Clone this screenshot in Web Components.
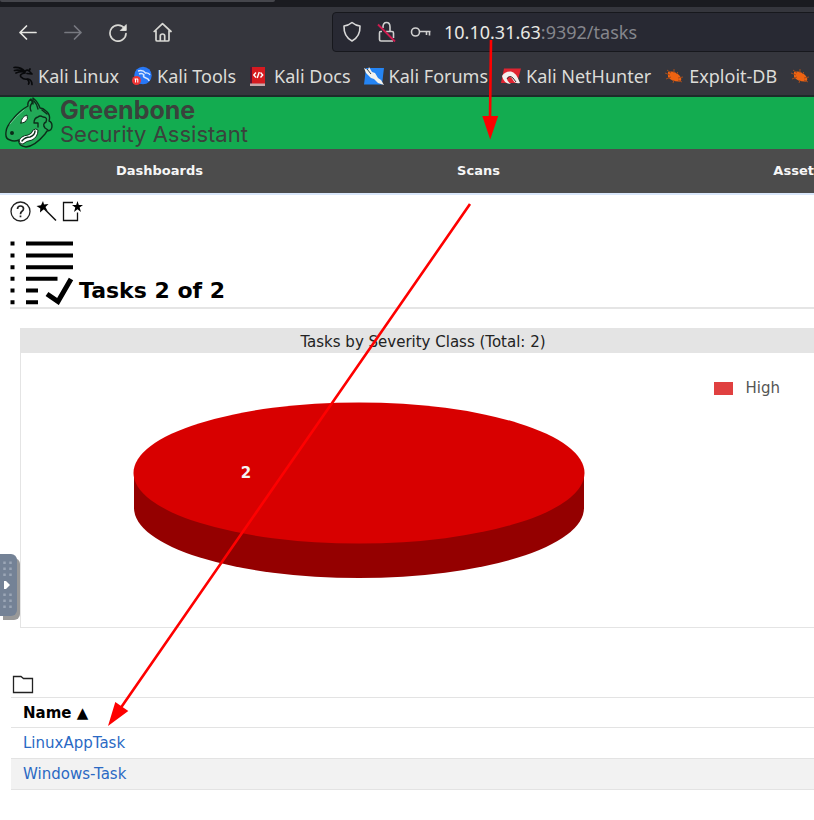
<!DOCTYPE html>
<html lang="en">
<head>
<meta charset="utf-8">
<title>Greenbone Security Assistant</title>
<style>
html { background: #fff; overflow-x: hidden; }
body { margin: 0; font-family: "DejaVu Sans", sans-serif; font-size: 15px; color: #000; }
</style>
</head>
<body>
<gsa-screen></gsa-screen>
<script>
function define(name, html) {
  const t = document.createElement('template');
  t.innerHTML = html;
  customElements.define(name, class extends HTMLElement {
    constructor() {
      super();
      this.attachShadow({ mode: 'open' }).append(t.content.cloneNode(true));
    }
  });
}

define('bookmark-link', `
<style>
:host { display: block; flex: none; }
a { display: flex; align-items: center; gap: 5px; color: #dcdcd8; text-decoration: none; font-size: 18px; line-height: 24px; white-space: nowrap; }
</style>
<a href="#"><slot name="icon"></slot><span><slot></slot></span></a>`);

define('browser-chrome', `
<style>
:host { display: block; background: #35363d; border-bottom: 2px solid #1d2b29; font-family: "Noto Sans", sans-serif; overflow: hidden; }
.tabs { height: 7px; background: #1a1b20; }
.tab { width: 275px; height: 2px; background: #45464c; border-radius: 0 0 4px 4px; }
.bar { display: flex; align-items: center; height: 50px; padding-left: 18px; }
button { flex: none; background: none; border: 0; padding: 0; width: 20px; height: 20px; margin-right: 25px; }
svg { display: block; flex: none; }
.field { flex: 1; display: flex; align-items: center; box-sizing: border-box; height: 40px; margin: 0 -20px 0 134px; padding-left: 9px; border: 1px solid #17181d; border-radius: 4px; background: #282933; }
.field button { width: 22px; height: 22px; margin-right: 12px; }
.url { font-size: 18px; line-height: 24px; color: #85868c; white-space: nowrap; margin: 0; }
.url b { font-weight: 400; color: #e8e8e4; }
.marks { display: flex; align-items: center; height: 38px; padding-left: 13px; gap: 13px; }
</style>
<div class="tabs"><div class="tab"></div></div>
<div class="bar">
 <button aria-label="Back"><svg width="20" height="20" fill="none" stroke="#e6e6e2" stroke-width="1.7" stroke-linecap="round" stroke-linejoin="round"><path d="M18 10.500H2M8.500 4L2 10.500L8.500 17"/></svg></button>
 <button aria-label="Forward"><svg width="20" height="20" fill="none" stroke="#777980" stroke-width="1.7" stroke-linecap="round" stroke-linejoin="round"><path d="M2 10.500H18M11.500 4L18 10.500L11.500 17"/></svg></button>
 <button aria-label="Reload"><svg width="20" height="20" fill="none" stroke="#d8d8d4" stroke-width="1.7" stroke-linecap="round"><path d="M16.500 6.500A8 8 0 1 0 18 11.500"/><path d="M18.200 3V8.500H12.700Z" fill="#e6e6e2" stroke-width="1"/></svg></button>
 <button aria-label="Home"><svg width="20" height="20" fill="none" stroke="#d8d8d4" stroke-width="1.7" stroke-linejoin="round" stroke-linecap="round"><path d="M1.200 9.500L9.500 1.700L18 9.500M3 8.500V18Q3 19 4.500 19H14.500Q16 19 16 18V8.500M7.300 18.500V14Q7.300 12 9.500 12Q11.700 12 11.700 14V18.500"/></svg></button>
 <div class="field">
  <button aria-label="Tracking protection"><svg width="22" height="22" fill="none" stroke="#d8d8d8" stroke-width="1.6" stroke-linejoin="round"><path d="M10 1.500Q13.500 4.500 18 5Q18.400 15.500 10 20Q1.600 15.500 2 5Q6.500 4.500 10 1.500Z"/></svg></button>
  <button aria-label="Connection not secure"><svg width="22" height="22" fill="none" stroke="#d0d0d0" stroke-width="1.6"><path d="M7 7V6Q7 1.500 10.500 1.500Q14 1.500 14 6V10M10 10.500H16Q17.500 10.500 17.500 12V17M6 10.500H4.500Q3.500 10.500 3.500 12V18.500Q3.500 20 5 20H17"/><path d="M2 3.500L19 20.500" stroke="#d01b50" stroke-width="1.800"/></svg></button>
  <button aria-label="Saved login"><svg width="22" height="22" fill="none" stroke="#d0d0d0" stroke-width="1.6"><circle cx="5.500" cy="11" r="4"/><path d="M9.500 10.500H20.500M16.500 10.500V14M19.500 10.500V14.500"/></svg></button>
  <p class="url"><b>10.10.31.63</b>:9392/tasks</p>
 </div>
</div>
<nav class="marks">
 <bookmark-link><svg slot="icon" width="20" height="20" fill="none" stroke="#08090b" stroke-width="1.700" stroke-linecap="round" stroke-linejoin="round"><path d="M1 1.500Q8 1 12 5.500Q5 3.500 1.500 4.500M3 7Q9 4.500 12 7Q6 8 8 11Q11 14 15 13Q19 14 19 18.500M12 5.500Q14 3 16 5L19 8L14 7.500M14 13Q17 16 15.500 18M16 5L17 3"/></svg>Kali Linux</bookmark-link>
 <bookmark-link><svg slot="icon" width="20" height="20"><circle cx="11" cy="9.500" r="8.700" fill="#2878f6"/><path d="M6 5Q11 3.500 13.500 7Q17 6.500 18 9M7 8Q10 6.500 12 9Q10 10.500 14 12Q17 13 17 15" fill="none" stroke="#d6e6ff" stroke-width="1.400"/><circle cx="4.500" cy="14.500" r="4.500" fill="#ee3434"/><path d="M3.500 13V16.500M5.800 13V16.500M2.500 13H6" stroke="#fff" fill="none"/></svg>Kali Tools</bookmark-link>
 <bookmark-link><svg slot="icon" width="20" height="20"><path d="M1 1H16V18H1Z" fill="#d61a20"/><path d="M1 1H3V18H1Z" fill="#5d1232"/><path d="M1 17.500H16V20H1Z" fill="#c7a8aa"/><path d="M7 6.500L4.800 9L7 11.500M11.500 6.500L13.700 9L11.500 11.500M10.300 6L8.200 12" stroke="#fff" stroke-width="1.400" fill="none"/></svg>Kali Docs</bookmark-link>
 <bookmark-link><svg slot="icon" width="20" height="20"><path d="M2 2H20L18 18.500H0Z" fill="#2585f4"/><path d="M0 2L4 4L5 1L8 6L11 7L14 12L17 14L20 19L14 17L10 13L7 12L2 7Z" fill="#f2f2ee"/><path d="M3 3L7 8" stroke="#444" fill="none"/></svg>Kali Forums</bookmark-link>
 <bookmark-link><svg slot="icon" width="20" height="20"><path d="M3 2.500H20L16 17H0Z" fill="#e02431"/><path d="M1 10Q4 5 10 5.500Q15 6 19 17Q14 18 12 14Q10 10 7 11Q4 14 10 18Q3 18 1 10Z" fill="#f4f0ee"/><path d="M6 13Q8 8.500 12 12L15 16" stroke="#3a2028" fill="none"/></svg>Kali NetHunter</bookmark-link>
 <bookmark-link><svg slot="icon" width="20" height="20"><path d="M4 6Q10 4 15 9Q19 13 16 15.500Q8 16 4 11Z" fill="#ef6311"/><path d="M3 4L7 7M10 3L10 7M14 6L12 8M19 11L14 12M18 16L14 14M1 7L6 9M2 13L7 11M9 17L10 14" stroke="#a34c1d" fill="none"/></svg>Exploit-DB</bookmark-link>
 <bookmark-link><svg slot="icon" width="20" height="20"><path d="M4 6Q10 4 15 9Q19 13 16 15.500Q8 16 4 11Z" fill="#ef6311"/><path d="M3 4L7 7M10 3L10 7M14 6L12 8M19 11L14 12M18 16L14 14M1 7L6 9M2 13L7 11M9 17L10 14" stroke="#a34c1d" fill="none"/></svg></bookmark-link>
</nav>`);

define('gsa-header', `
<style>
:host { display: flex; align-items: flex-start; height: 52px; padding-left: 5px; gap: 6px; background: #13ac50; color: #3a423c; font-family: Inter, sans-serif; }
svg { flex: none; }
p { margin: 0; font-size: 22px; line-height: 22px; }
.name { font-size: 25px; line-height: 26px; font-weight: 700; }
</style>
<svg width="49" height="52" fill="none" stroke="#0c2e1a" stroke-width="1.400" stroke-linejoin="round" stroke-linecap="round">
 <path d="M23 9Q14 14 8 22Q1 30 1 35Q0 42 5 43Q9 45 14 43Q13 49 21 50Q30 49 40 37L42 34Q47 34 47 29Q47 25 44 24Q46 18 41 14Q38 11 35 11Q33 5 28 1L28 7L26 2Q22 5 23 9Z" fill="#22a957"/>
 <path d="M27 6Q24 10 26 14M29 4Q32 7 33 12M29 26Q29 21 33 20Q35 18 38 20Q43 20 41 25Q37 27 40 31L43 33M30 26L33 26L33 30M37 13L42 17"/>
 <path d="M16 26Q16 20 22 18Q24 22 20 25Q18 26 16 26Z" fill="#fff" stroke-width="1"/>
 <path d="M14 44Q15 39 23 38Q27 37 28 33Q31 31 33 33Q33 40 27 43Q21 44 18 47Q15 48 14 44Z" fill="#fff" stroke-width="1"/>
 <path d="M17 44Q20 40 25 40Q30 38 30 34"/>
 <circle cx="7" cy="36" r="1.300" fill="#062411"/>
 <path d="M5 27Q11 19 19 13" stroke="#6dcc94" stroke-width="1"/>
</svg>
<div><p class="name">Greenbone</p><p>Security Assistant</p></div>`);

define('gsa-nav', `
<style>
:host { display: block; overflow: hidden; background: #4c4c4c; border-bottom: 2px solid #d9e7fb; }
nav { display: grid; grid-template-columns: repeat(3, 319px); height: 44px; align-items: center; justify-items: center; }
a { color: #f6f6f6; font-weight: 700; font-size: 13px; line-height: 16px; text-decoration: none; }
</style>
<nav><a href="#">Dashboards</a><a href="#">Scans</a><a href="#">Assets</a></nav>`);

define('page-tools', `
<style>
:host { display: flex; gap: 5px; padding: 6px 10px 0; }
button { width: 21px; height: 21px; background: none; border: 0; padding: 0; }
svg { display: block; }
</style>
<button aria-label="Help"><svg width="21" height="21" fill="none" stroke="#222"><circle cx="10.500" cy="10.500" r="9.500" stroke-width="1.300"/><path d="M7.500 8Q7.500 5 10.500 5Q13.500 5 13.500 7.800Q13.500 9.300 12 10.300Q10.500 11.300 10.500 13.200M10.500 14.500V16.300" stroke-width="1.700"/></svg></button>
<button aria-label="Task wizard"><svg width="21" height="21"><path d="M7 0L8 3.500L12.500 3L9.500 6L11.500 10L7.500 8.500L4 11.500L4.300 7.500L0.500 5L5 4.300Z"/><path d="M9 8.500L20 19.500" stroke="#111" stroke-width="1.500"/></svg></button>
<button aria-label="New task"><svg width="21" height="21"><path d="M11 1.500H1.500V19.500H15.500V11.500" fill="none" stroke="#111" stroke-width="1.300"/><path d="M15.500 0L16.800 4L21 4L17.600 6.600L19 11L15.500 8.300L12 11L13.300 6.600L10 4H14.200Z"/></svg></button>`);

define('section-title', `
<style>
:host { display: flex; align-items: flex-end; gap: 5px; margin: 18px 0 0 10px; padding-bottom: 2px; border-bottom: 2px solid #e5e5e5; }
svg { flex: none; }
h1 { margin: 0; font-size: 22px; line-height: 28px; font-weight: 700; }
</style>
<svg width="64" height="65" fill="none" stroke="#000">
 <path d="M0.500 3.500H4.500M0.500 15.500H4.500M0.500 27.300H4.500M0.500 38.800H4.500M0.500 50.500H4.500M0.500 62.300H4.500M16 3.500H63M16 15.500H63M16 27.300H63M16 38.800H47.500M16 50.500H28M16 62.300H28" stroke-width="4"/>
 <path d="M37 54L48 61.500L61 39" stroke-width="5"/>
</svg>
<h1><slot></slot></h1>`);

define('severity-chart', `
<style>
:host { display: block; margin: 19px -12px 0 20px; box-sizing: border-box; border: 1px solid #e4e4e4; border-top: 0; }
h2 { margin: 0; height: 25px; background: #e4e4e4; font-size: 15px; line-height: 28px; font-weight: 400; text-align: center; color: #222; }
.body { display: flex; justify-content: space-between; height: 274px; }
svg { display: block; flex: none; }
.legend { display: flex; align-items: center; gap: 13px; height: 20px; margin: 25px 45px 0 0; font-size: 15px; line-height: 20px; color: #555; }
.legend i { width: 19px; height: 13px; background: #e04040; }
</style>
<h2>Tasks by Severity Class (Total: 2)</h2>
<div class="body">
 <svg width="580" height="274" role="img" aria-label="High: 2">
  <path d="M113 120V155A225 70 0 0 0 563 155V120Z" fill="#940000"/>
  <ellipse cx="338" cy="120" rx="225.500" ry="70.500" fill="#d80000"/>
  <text x="225" y="125" text-anchor="middle" font-size="15" font-weight="700" fill="#f4f4f4">2</text>
 </svg>
 <div class="legend"><i></i><span>High</span></div>
</div>`);

define('task-table', `
<style>
:host { display: block; margin: 47px 0 0 11px; }
button { display: block; background: none; border: 0; padding: 0; margin: 0 0 3px 1px; height: 19px; }
svg { display: block; }
table { width: 100%; border-collapse: collapse; }
th, td { box-sizing: border-box; height: 31px; padding: 0 12px; text-align: left; font-size: 15px; line-height: 20px; border-top: 1px solid #e3e3e3; border-bottom: 1px solid #e3e3e3; }
th { height: 30px; }
tbody tr:nth-child(even) { background: #f2f2f2; }
a { color: #2a69c4; text-decoration: none; }
</style>
<button aria-label="Show filter"><svg width="22" height="19" fill="none" stroke="#222" stroke-width="1.300"><path d="M1.500 17.500V1.500H9L11.500 3.500H20.500V17.500Z"/></svg></button>
<table>
 <thead><tr><th scope="col">Name ▲</th></tr></thead>
 <tbody><tr><td><a href="#">LinuxAppTask</a></td></tr><tr><td><a href="#">Windows-Task</a></td></tr></tbody>
</table>`);

define('drawer-handle', `
<style>
:host { position: absolute; left: 0; top: 554px; }
button { display: block; width: 17px; height: 62px; padding: 0; border: 0; border-radius: 0 6px 6px 0; background: #748296; box-shadow: 3px 4px 0 #999; }
svg { display: block; }
</style>
<button aria-label="Open panel"><svg width="17" height="62"><path d="M4.500 7.500V22M10.500 7.500V22M4.500 39.500V55M10.500 39.500V55" stroke="#9ba6b6" stroke-width="2.500" stroke-dasharray="2.500 3.500"/><path d="M4 27H6L10 31L6 35H4Z" fill="#fff"/></svg></button>`);

define('guide-arrows', `
<style>
:host { position: absolute; left: 0; top: 0; pointer-events: none; }
svg { display: block; }
</style>
<svg width="520" height="740" fill="#fe0000" stroke="none" aria-hidden="true">
 <path d="M491 40L490 118M470 204L120 709" stroke="#fe0000" stroke-width="2.600"/>
 <path d="M482.300 116H498.200L490.200 139.500ZM108 726L115.300 702L128.300 711Z"/>
</svg>`);

define('gsa-screen', `
<style>
:host { display: block; position: relative; overflow: hidden; padding-bottom: 24px; }
</style>
<browser-chrome></browser-chrome>
<gsa-header></gsa-header>
<gsa-nav></gsa-nav>
<main>
 <page-tools></page-tools>
 <section-title>Tasks 2 of 2</section-title>
 <severity-chart></severity-chart>
 <task-table></task-table>
</main>
<drawer-handle></drawer-handle>
<guide-arrows></guide-arrows>`);
</script>
</body>
</html>
